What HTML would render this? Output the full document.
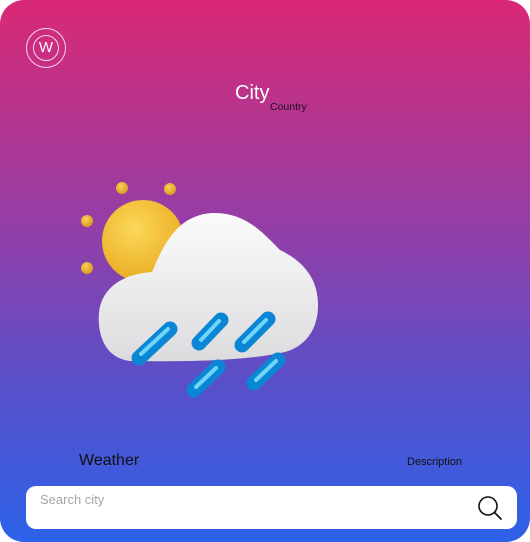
<!DOCTYPE html>
<html><head><style>
html,body{margin:0;padding:0;background:#fff;}
.card{position:relative;width:530px;height:542px;border-radius:24px;overflow:hidden;
background:linear-gradient(180deg,#da2875 0%,#b8348d 20%,#8e40ab 45%,#5a4fc8 70%,#2c62e9 100%);
font-family:"Liberation Sans",sans-serif;}
.logo{position:absolute;left:26px;top:28px;width:38px;height:38px;border:1.3px solid #f3d7ea;border-radius:50%;}
.logo .in{position:absolute;left:6px;top:6px;width:24px;height:24px;border:1.3px solid #f3d7ea;border-radius:50%;color:#fff;font-size:15px;line-height:24px;text-align:center;}
.city{position:absolute;left:235px;top:82px;color:#fff;font-size:20px;}
.country{position:absolute;left:270px;top:101px;color:#1a0f2a;font-size:10.5px;}
.weather{position:absolute;left:79px;top:452px;font-size:16px;color:#111;}
.desc{position:absolute;left:407px;top:456px;font-size:11px;color:#111;}
.search{position:absolute;left:26px;top:486px;width:491px;height:43px;background:#fff;border-radius:10px;}
.search span{position:absolute;left:14px;top:6px;font-size:13px;color:#a5a5a5;}
</style></head><body>
<div class="card">
<div class="logo"><div class="in">W</div></div>
<div class="city">City</div>
<div class="country">Country</div>
<svg width="530" height="542" style="position:absolute;left:0;top:0">
<defs>
<radialGradient id="sun" cx="0.4" cy="0.35" r="0.7"><stop offset="0" stop-color="#fbd85a"/><stop offset="1" stop-color="#e9a91e"/></radialGradient>
<radialGradient id="dot" cx="0.4" cy="0.35" r="0.7"><stop offset="0" stop-color="#f8d25a"/><stop offset="1" stop-color="#d9981a"/></radialGradient>
<linearGradient id="cl" gradientUnits="userSpaceOnUse" x1="0" y1="213" x2="0" y2="362"><stop offset="0" stop-color="#fbfbfb"/><stop offset="1" stop-color="#dcdcdf"/></linearGradient>
</defs>
<circle cx="122" cy="188" r="6" fill="url(#dot)"/>
<circle cx="170" cy="189" r="6" fill="url(#dot)"/>
<circle cx="87" cy="221" r="6" fill="url(#dot)"/>
<circle cx="87" cy="268" r="6" fill="url(#dot)"/>
<circle cx="143" cy="241" r="41" fill="url(#sun)"/>
<g fill="url(#cl)">
<path d="M130 361 C105 358 97 335 99 312 C102 288 122 274 152 272 C165 240 180 215 212 213 C245 212 262 232 280 250 C305 262 318 280 318 305 C318 335 300 348 285 352 C250 360 200 362 130 361 Z"/>
</g>
<g stroke-linecap="round" fill="none">
<g stroke="#0a86d4" stroke-width="15">
<line x1="139" y1="358" x2="170" y2="329"/>
<line x1="199" y1="343" x2="221" y2="320"/>
<line x1="242" y1="345" x2="268" y2="319"/>
<line x1="194" y1="390" x2="218" y2="367"/>
<line x1="254" y1="383" x2="278" y2="360"/>
</g>
<g stroke="#6fd6fa" stroke-width="4">
<line x1="141" y1="354" x2="168" y2="329"/>
<line x1="201" y1="340" x2="219" y2="321"/>
<line x1="244" y1="342" x2="266" y2="320"/>
<line x1="196" y1="387" x2="216" y2="368"/>
<line x1="256" y1="380" x2="276" y2="361"/>
</g>
</g>
</svg>
<div class="weather">Weather</div>
<div class="desc">Description</div>
<div class="search"><span>Search city</span></div>
<svg width="530" height="542" style="position:absolute;left:0;top:0">
<circle cx="488" cy="506" r="9" fill="none" stroke="#111" stroke-width="1.6"/>
<line x1="495" y1="513" x2="501" y2="519" stroke="#111" stroke-width="1.8" stroke-linecap="round"/>
</svg>
</div>
</body></html>
